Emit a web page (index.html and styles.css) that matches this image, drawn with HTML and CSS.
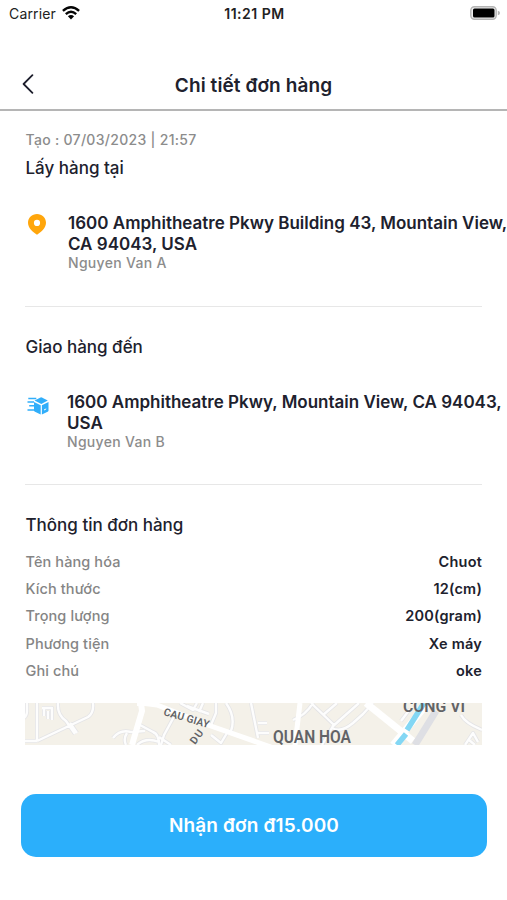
FILE: index.html
```html
<!DOCTYPE html>
<html lang="vi">
<head>
<meta charset="utf-8">
<title>Chi tiết đơn hàng</title>
<link rel="stylesheet" href="styles.css">
</head>
<body>
<div class="status">
  <div class="carrier"><span>Carrier</span>
    <svg class="wifi" width="18" height="14" viewBox="0 0 18 14"><g fill="none" stroke="#050505" stroke-width="2.4"><path d="M.9 4.9Q9-2.3 17.1 4.9"/><path d="M3.8 8.1Q9 3.5 14.2 8.1"/></g><path d="M5.9 10.2Q9 7.6 12.1 10.2L9 13.6Z" fill="#050505"/></svg>
  </div>
  <div class="clock">11:21 PM</div>
  <svg class="battery" width="30" height="14" viewBox="0 0 30 14"><rect x=".8" y=".8" width="25.4" height="12.4" rx="3.6" fill="#eee" stroke="#b4b4b4" stroke-width="1.4"/><rect x="3" y="2.6" width="21.5" height="8.8" rx="1.5" fill="#000"/><path d="M27.8 4.7Q30 5.3 30 7T27.8 9.3Z" fill="#b4b4b4"/></svg>
</div>
<header class="header">
  <svg class="back" width="12" height="20" viewBox="0 0 12 20"><path d="M10.4 1.2 1.6 10l8.8 8.8" fill="none" stroke="#1d1e2c" stroke-width="1.8" stroke-linecap="round" stroke-linejoin="round"/></svg>
  <h1>Chi tiết đơn hàng</h1>
</header>
<main>
  <div class="created">Tạo : 07/03/2023 | 21:57</div>
  <section class="stop pickup">
    <h2>Lấy hàng tại</h2>
    <div class="place">
      <svg class="pin" width="18" height="21" viewBox="0 0 18 21"><path fill="#ffa60c" fill-rule="evenodd" d="M9 0C4 0 0 3.9 0 8.8c0 5 4.3 9 9 12 4.700-3 9-7 9-12C18 3.900 14 0 9 0Zm0 5.800a3.100 3.100 0 1 1 0 6.200 3.100 3.100 0 0 1 0-6.200Z"/></svg>
      <div class="address"><strong>1600 Amphitheatre Pkwy Building 43, Mountain View,<br>CA 94043, USA</strong><span>Nguyen Van A</span></div>
    </div>
  </section>
  <section class="stop delivery">
    <h2>Giao hàng đến</h2>
    <div class="place">
      <svg class="box" width="22" height="18" viewBox="0 0 22 18"><g fill="#31aefa"><path d="M7.500 3.600 13.600.4q.6-.3 1.200 0l6 3.200-6.500 3.300Z"/><path d="M7 5 13.700 8.300v9.100L8 14.700q-1-.5-1-1.500Z"/><path d="M14.900 8.300 21.500 5v8.200q0 1-.9 1.500l-5.700 2.700Z"/></g><path d="M1.300 1.500h8M.5 5h6.500M2.200 8.700H7M.5 13h7" stroke="#31aefa" stroke-width="1.500" fill="none"/><path d="m17 13 2.200-1.100" stroke="#fff" stroke-width="1"/></svg>
      <div class="address"><strong>1600 Amphitheatre Pkwy, Mountain View, CA 94043,<br>USA</strong><span>Nguyen Van B</span></div>
    </div>
  </section>
  <section class="info">
    <h2>Thông tin đơn hàng</h2>
    <dl>
      <div><dt>Tên hàng hóa</dt><dd>Chuot</dd></div>
      <div><dt>Kích thước</dt><dd>12(cm)</dd></div>
      <div><dt>Trọng lượng</dt><dd>200(gram)</dd></div>
      <div><dt>Phương tiện</dt><dd>Xe máy</dd></div>
      <div><dt>Ghi chú</dt><dd>oke</dd></div>
    </dl>
  </section>
  <svg class="map" width="457" height="42" viewBox="0 0 457 42">
    <defs>
      <path id="lanes" d="M2 0v8q0 6-5 8M12 0v38M17 5h10v12M19 5v8M23 8v8M33 0q-1 12 8 18l9 13M45 20l7 10M12 38 63 14q6-4 5-14M0 38h12M88 35q7-9 18-6l14-1M101 42q-3-6 1-12M115 22l13 7q6 2 6 13M112 42q9-8 22-3M151 10l-12 22-3 10M134 34l12 8M155 0l13 7 4-7M162 3l22 8M178 0l-4 9M191 0v10l-5 12M186 32l10 8 6-10M201 0q10 14 5 28M226 0l7 35M233 20h9M233 30h11M288 0q-7 12-20 17M286 0l23 22M298 12l14-12M307 24 334 0M297 42l11-19M307 25q9 5 21-5l10-9 10-11M376 18l9-12M436 12q4 8 21 15M440 42l8-12 5 9M444 37l6 5"/>
    </defs>
    <rect width="457" height="42" fill="#f4f1e9"/>
    <g fill="none" stroke-linejoin="round">
      <use href="#lanes" stroke="#e4e4e6" stroke-width="4"/>
      <use href="#lanes" stroke="#fdfdfd" stroke-width="2.400"/>
      <path d="M112 0h4l1 8-8 27-2 7" stroke="#fff" stroke-width="6"/>
      <path d="m116 0 16 2 51 20 63 22M275 0l-5 42" stroke="#fff" stroke-width="5"/>
      <path d="M341 0 372 25l16 13M403 0l-35 42" stroke="#fff" stroke-width="7"/>
      <path d="m411 8-21 34" stroke="#dedfe4" stroke-width="7"/>
      <path d="m399 0-17 27M381 31l-9 11" stroke="#83d7f4" stroke-width="5.500"/>
    </g>
    <g fill="#626366" font-family="Roboto" font-weight="600">
      <text x="138" y="12" font-size="10.500" textLength="47" transform="rotate(16 138 12)">CAU GIAY</text>
      <text x="170" y="42" font-size="10.500" textLength="15" transform="rotate(-53 170 42)">DU</text>
      <text x="248" y="40" font-size="18" textLength="78" lengthAdjust="spacingAndGlyphs">QUAN HOA</text>
      <text x="378" y="9" font-size="17" textLength="62" lengthAdjust="spacingAndGlyphs">CONG VI</text>
    </g>
  </svg>
</main>
<button class="accept">Nhận đơn đ15.000</button>
</body>
</html>
```
FILE: styles.css
```css
* { box-sizing: border-box; }
body { margin: 0; width: 507px; height: 900px; overflow: hidden; background: #fff; color: #20212d; font-family: Inter, "Noto Sans", sans-serif; }
h1, h2, dl, dd { margin: 0; }
.status { height: 28px; padding: 0 7px 0 9px; display: grid; grid-template-columns: 1fr auto 1fr; align-items: center; color: #222; }
.carrier { display: flex; align-items: center; gap: 6px; margin-top: -1px; font-size: 14px; letter-spacing: .15px; }
.wifi { margin-top: -1px; }
.clock { margin-top: -1px; font-size: 14px; font-weight: 600; letter-spacing: .5px; }
.battery { justify-self: end; margin-top: -2px; }
.header { height: 83px; padding: 35px 22px 0; display: grid; grid-template-columns: 30px 1fr 30px; align-items: center; border-bottom: 2px solid #b5b5b5; }
.back { margin-top: -4px; }
.header h1 { text-align: center; font-size: 19px; font-weight: 600; line-height: 24px; letter-spacing: .1px; }
main { padding: 20px 0 0 25px; }
.created { height: 18px; line-height: 18px; font-size: 14px; font-weight: 500; letter-spacing: .3px; color: #8c8c8c; text-indent: .5px; }
h2 { font-size: 17px; line-height: 22px; font-weight: 500; text-indent: .5px; }
.stop { width: 457px; border-bottom: 1px solid #e7e7e7; }
.pickup { height: 158px; padding-top: 8px; }
.delivery { height: 178px; padding-top: 29px; }
.place { display: flex; align-items: flex-start; margin-top: 34px; }
.pin { flex: none; margin: 1px 22px 0 3px; }
.box { flex: none; margin: 5px 18px 0 2px; }
.address { white-space: nowrap; }
.address strong, .address span { display: block; }
.address strong { font-size: 17px; line-height: 21px; font-weight: 600; }
.address span { margin-top: -1px; font-size: 14px; line-height: 18px; font-weight: 500; letter-spacing: .3px; color: #8c8c8c; }
.info { width: 457px; height: 218px; padding-top: 29px; }
dl { margin-top: 12px; }
dl div { display: flex; justify-content: space-between; height: 27.200px; line-height: 27px; font-size: 14.500px; }
dt { color: #858585; font-weight: 500; letter-spacing: .1px; text-indent: .5px; }
dd { font-weight: 600; letter-spacing: .2px; }
.map { display: block; overflow: hidden; }
.accept { display: block; width: 466px; height: 63px; margin: 49px 0 0 21px; border: 0; border-radius: 15px; background: #2baffb; color: #fff; font: 600 19px Inter, "Noto Sans", sans-serif; letter-spacing: .15px; }
```
